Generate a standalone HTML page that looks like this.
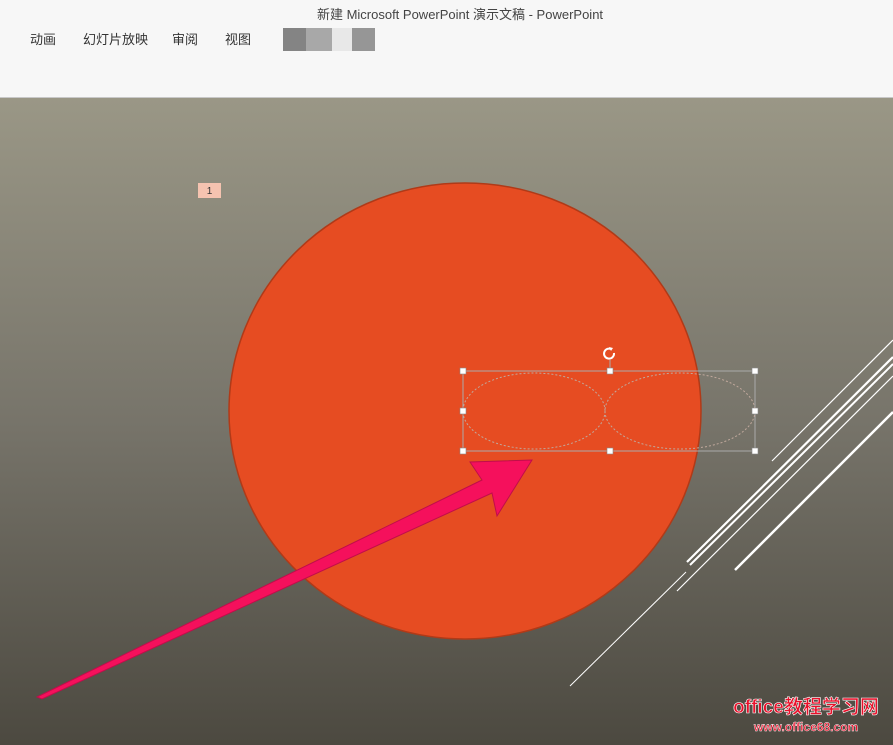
<!DOCTYPE html>
<html><head><meta charset="utf-8"><style>
body{margin:0;width:893px;height:745px;overflow:hidden;background:#f7f7f7;font-family:"Liberation Sans","Noto Sans CJK SC",sans-serif}
.t{position:absolute;top:4px;left:0;width:920px;text-align:center;font-size:13px;color:#444}
.m{position:absolute;top:29px;font-size:13px;color:#333}
</style></head><body>
<div class="t">新建 Microsoft PowerPoint 演示文稿 - PowerPoint</div>
<div class="m" style="left:30px">动画</div>
<div class="m" style="left:83px">幻灯片放映</div>
<div class="m" style="left:172px">审阅</div>
<div class="m" style="left:225px">视图</div>
<div style="position:absolute;left:283px;top:28px;width:23px;height:23px;background:#848484"></div>
<div style="position:absolute;left:306px;top:28px;width:26px;height:23px;background:#a8a8a8"></div>
<div style="position:absolute;left:332px;top:28px;width:20px;height:23px;background:#e8e8e8"></div>
<div style="position:absolute;left:352px;top:28px;width:23px;height:23px;background:#969696"></div>
<div style="position:absolute;left:0;top:97px;width:893px;height:1px;background:#c8c8c8"></div>
<svg style="position:absolute;left:0;top:98px" width="893" height="647" viewBox="0 98 893 647">
<defs><linearGradient id="g" x1="0" y1="0" x2="0" y2="1"><stop offset="0" stop-color="#9a9786"/><stop offset="0.5" stop-color="#77746a"/><stop offset="1" stop-color="#4c4940"/></linearGradient></defs>
<rect x="0" y="98" width="893" height="647" fill="url(#g)"/>
<rect x="198" y="183" width="23" height="15" fill="#f5c3b0"/>
<text x="209.5" y="194" font-size="10" text-anchor="middle" fill="#333">1</text>
<ellipse cx="465" cy="411" rx="236" ry="228" fill="#e64c22" stroke="#b03a18" stroke-width="1.5"/>
<g stroke="#fff" stroke-width="1.2">
<line x1="772" y1="461" x2="893" y2="340"/>
<line x1="687" y1="562" x2="893" y2="357" stroke-width="2.2"/>
<line x1="690" y1="565" x2="893" y2="364" stroke-width="2"/>
<line x1="677" y1="591" x2="893" y2="376"/>
<line x1="735" y1="570" x2="893" y2="412" stroke-width="2.5"/>
<line x1="570" y1="686" x2="686" y2="572" stroke-width="1"/>
</g>
<rect x="463" y="371" width="292" height="80" fill="none" stroke="#aaa" stroke-width="1"/>
<ellipse cx="534" cy="411" rx="71" ry="38" fill="none" stroke="#c0a89c" stroke-dasharray="2 2"/>
<ellipse cx="680" cy="411" rx="75" ry="38" fill="none" stroke="#c0a89c" stroke-dasharray="2 2"/>
<line x1="610" y1="360" x2="610" y2="371" stroke="#aaa"/>
<g fill="#fff" stroke="#888" stroke-width="0.6">
<rect x="460" y="368" width="6" height="6"/><rect x="607" y="368" width="6" height="6"/><rect x="752" y="368" width="6" height="6"/>
<rect x="460" y="408" width="6" height="6"/><rect x="752" y="408" width="6" height="6"/>
<rect x="460" y="448" width="6" height="6"/><rect x="607" y="448" width="6" height="6"/><rect x="752" y="448" width="6" height="6"/>
</g>
<path d="M614 353 a5 5 0 1 1 -3 -4" fill="none" stroke="#fff" stroke-width="2"/>
<path d="M609 347 l4 1 -2 3z" fill="#fff"/>
<polygon points="37,697 482,480 470,462 532,460 497,516 492,493 42,699" fill="#f5105c" stroke="#c00d4a" stroke-width="1"/>
<text x="806" y="713" font-size="19" text-anchor="middle" fill="#e8102a" stroke="#fff" stroke-width="0.6" font-weight="bold">office教程学习网</text>
<text x="806" y="731" font-size="12" text-anchor="middle" fill="#e8102a" stroke="#fff" stroke-width="0.4" font-weight="bold">www.office68.com</text>
</svg>
</body></html>
